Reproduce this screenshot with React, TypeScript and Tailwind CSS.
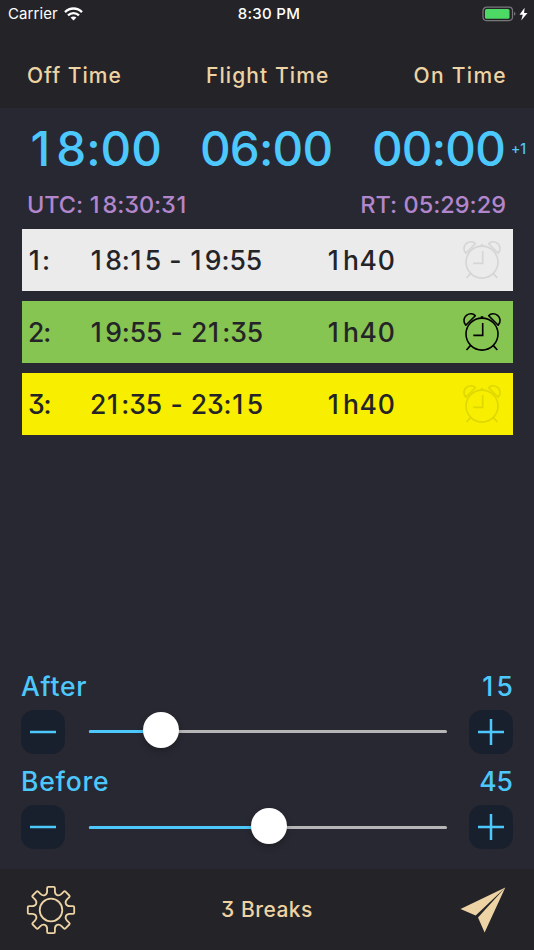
import React from "react";

const rows = [
  { id: "1:", time: "18:15 - 19:55", length: "1h40", bg: "bg-[#ebebeb]", icon: "text-[#d5d5d5]" },
  { id: "2:", time: "19:55 - 21:35", length: "1h40", bg: "bg-[#87c552]", icon: "text-black" },
  { id: "3:", time: "21:35 - 23:15", length: "1h40", bg: "bg-[#f7ee00]", icon: "text-[#dfd700]" },
];

/* Proportional digits, with the narrow "1" padded out to a full digit cell. */
function Digits({ children }: { children: string }) {
  return (
    <>
      {children.split(/(1)/).map((part, i) =>
        part === "1" ? (
          <span key={i} className="pl-[0.03em] pr-[0.13em]">1</span>
        ) : (
          part
        ),
      )}
    </>
  );
}

function AlarmClock({ className }: { className: string }) {
  return (
    <svg className={className} width="40" height="40" viewBox="0 0 40 40" fill="none" stroke="currentColor" strokeWidth="1.6">
      <circle cx="20" cy="22.1" r="16" />
      <path d="M20.7 11v12.4h-9.4" />
      <path d="M8.6 33.4l-4.1 4.6M31.2 33.4l4.1 4.6" />
      <path d="M3.8 13.2c-2.9-3.2-2.2-7.6.6-9.9 2.8-2.2 6.8-2.2 8.9.4z" strokeLinejoin="round" />
      <path d="M36.2 13.2c2.9-3.2 2.2-7.6-.6-9.9-2.8-2.2-6.8-2.2-8.9.4z" strokeLinejoin="round" />
      <path d="M18.7 5.2h2.6" strokeWidth="2" />
    </svg>
  );
}

function gearPath() {
  let d = "";
  for (let i = 0; i < 8; i++) {
    const a = (i * Math.PI) / 4;
    const p = (x: number, y: number, turn = 0) => {
      const t = a + turn;
      return `${(25 + x * Math.cos(t) - y * Math.sin(t)).toFixed(2)} ${(25 + x * Math.sin(t) + y * Math.cos(t)).toFixed(2)}`;
    };
    const q = Math.PI / 4;
    d += `${i ? "L" : "M"}${p(-3.9, -18.8)}L${p(-3.9, -22)}Q${p(-3.9, -23.2)} ${p(-2.7, -23.2)}L${p(2.7, -23.2)}Q${p(3.9, -23.2)} ${p(3.9, -22)}L${p(3.9, -18.8)}C${p(3.9, -14.8)} ${p(-3.9, -14.8, q)} ${p(-3.9, -18.8, q)}`;
  }
  return d + "Z";
}

function StepButton({ path }: { path: string }) {
  return (
    <button className="flex size-11 items-center justify-center rounded-[13px] bg-[#19202d] text-[#4dc8fd]">
      <svg width="26" height="26" viewBox="0 0 26 26" stroke="currentColor" strokeWidth="2.5">
        <path d={path} />
      </svg>
    </button>
  );
}

function Stepper({ label, value, fill }: { label: string; value: string; fill: number }) {
  return (
    <section className="h-[95.5px]">
      <div className="flex h-9 items-center justify-between pt-px text-[26.5px] font-medium text-[#4dc8fd]">
        <span className="tracking-[0.8px]">{label}</span>
        <span><Digits>{value}</Digits></span>
      </div>
      <div className="mt-[5.5px] flex h-11 items-center">
        <StepButton path="M0 13h26" />
        <div className="relative ml-[24px] mr-[22px] h-[3px] w-[358px] rounded-full bg-[#b6b6b8]">
          <div className="h-full rounded-full bg-[#4dc8fd]" style={{ width: fill }} />
          <span className="absolute -top-[18px] size-9 -translate-x-1/2 rounded-full bg-white shadow-[0_3px_6px_rgba(0,0,0,0.25)]" style={{ left: fill }} />
        </div>
        <StepButton path="M0 13h26M13 0v26" />
      </div>
    </section>
  );
}

export default function App() {
  return (
    <div className="flex h-[950px] w-[534px] flex-col overflow-hidden bg-[#282832] font-['Inter','Liberation_Sans',sans-serif] whitespace-nowrap [font-feature-settings:'calt'_0,'cv09'_1]">
      <header className="h-[107.5px] bg-[#242428]">
        <div className="grid h-7 grid-cols-3 items-center pl-2 pr-1.5 text-[15px] text-white [font-feature-settings:normal]">
          <div className="flex items-center gap-[6px]">
            <span className="tracking-[0.1px]">Carrier</span>
            <svg width="19" height="14" viewBox="0 0 19 14" fill="none" stroke="white" strokeWidth="2.3">
              <path d="M1 5.1C5.8.3 13.2.3 18 5.1M4 8.4c3.1-3.1 7.9-3.1 11 0" />
              <path d="M9.5 13.4L6.6 10.5c1.6-1.5 4.2-1.5 5.8 0z" fill="white" stroke="none" />
            </svg>
          </div>
          <span className="pl-[2px] text-center font-medium tracking-[0.3px]">8:30 PM</span>
          <div className="flex items-center justify-end">
            <svg width="46" height="16" viewBox="0 0 46 16">
              <rect x="1" y="1.2" width="29.5" height="13.4" rx="3.5" fill="none" stroke="#77777a" strokeWidth="1.2" />
              <rect x="3" y="3.1" width="24.5" height="9.7" rx="1.5" fill="#4cd964" />
              <path d="M32 5.8q3 2 0 4z" fill="#77777a" />
              <path d="M42.6 1.8l-5.1 7h3.3l-1.6 5.8 6.3-7.5h-3.4z" fill="white" />
            </svg>
          </div>
        </div>
        <div className="mt-[34px] flex h-7 items-center justify-between pl-[27px] pr-[27px] text-[21px] font-medium text-[#eed3a4]">
          <span className="tracking-[1px]">Off Time</span>
          <span className="tracking-[1.1px]">Flight Time</span>
          <span className="tracking-[1.3px]">On Time</span>
        </div>
      </header>

      <main className="flex flex-1 flex-col">
        <div className="flex h-[82px] items-center text-[47.5px] font-medium leading-none text-[#4dc8fd]">
          <span className="ml-[29px] w-[171px]"><Digits>18:00</Digits></span>
          <span className="w-[172px] tracking-[-0.8px]">06:00</span>
          <span className="w-[139px] tracking-[-0.8px]">00:00</span>
          <span className="text-[14px]">+1</span>
        </div>
        <div className="flex h-[30px] items-center justify-between pl-[27px] pr-[28px] text-[23.5px] font-medium text-[#b286cc]">
          <span className="tracking-[-0.1px]"><Digits>UTC: 18:30:31</Digits></span>
          <span>RT: 05:29:29</span>
        </div>
        <div className="ml-[22px] mt-[9.5px] flex w-[491px] flex-col gap-[10.2px]">
          {rows.map((row) => (
            <div key={row.id} className={`flex h-[62px] items-center pl-[6px] text-[26.5px] font-medium text-[#242428] ${row.bg}`}>
              <span className="w-[62px] pt-px tracking-[-1.2px]"><Digits>{row.id}</Digits></span>
              <span className="w-[237px] pt-px tracking-[-0.1px] [word-spacing:1.3px]"><Digits>{row.time}</Digits></span>
              <span className="w-[135px] pt-px tracking-[0.7px]"><Digits>{row.length}</Digits></span>
              <AlarmClock className={row.icon} />
            </div>
          ))}
        </div>
        <div className="mx-[21px] mt-auto h-[201px]">
          <Stepper label="After" value="15" fill={71.5} />
          <Stepper label="Before" value="45" fill={179.5} />
        </div>
      </main>

      <footer className="flex h-[81px] items-center justify-between bg-[#242428] pl-[26px] pr-[28px] text-[21px] font-medium text-[#eed3a4]">
        <svg width="50" height="50" viewBox="0 0 50 50" fill="none" stroke="currentColor" strokeWidth="1.8" strokeLinejoin="round">
          <path d={gearPath()} />
          <circle cx="25" cy="25" r="11.3" />
        </svg>
        <span className="-ml-[2px] pt-px tracking-[0.5px]">3 Breaks</span>
        <svg width="46" height="46" viewBox="0 0 46 46" fill="currentColor">
          <path d="M45.3.5L.5 22l15.2 6.5zM45.3.5L18 30.5l6.6 15z" />
        </svg>
      </footer>
    </div>
  );
}
